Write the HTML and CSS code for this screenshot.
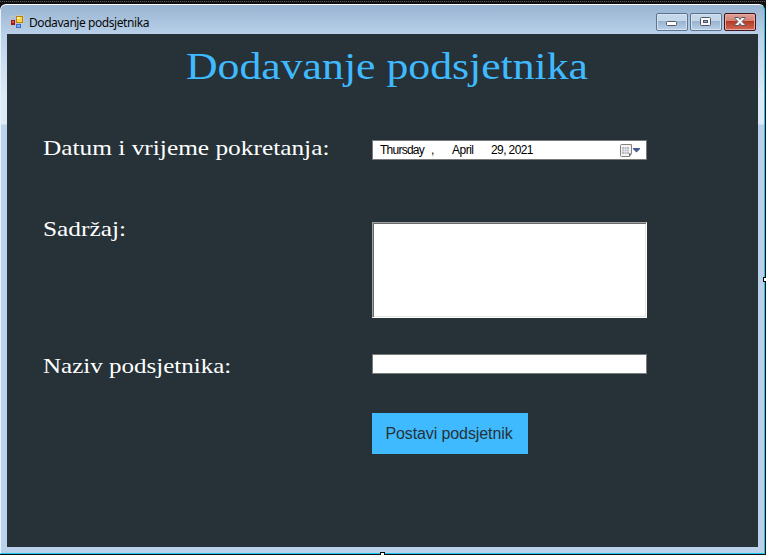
FILE: index.html
```
<!DOCTYPE html>
<html lang="hr">
<head>
<meta charset="utf-8">
<title>Dodavanje podsjetnika</title>
<link rel="stylesheet" href="styles.css">
</head>
<body>
<div class="window">
  <header class="titlebar">
    <svg class="app-icon" width="14" height="14" viewBox="0 0 14 14" shape-rendering="crispEdges">
      <path d="M.5 1.500h5v-1h8v8h-3v5h-10z" fill="none" stroke="#c3c6c8"/>
      <rect x="6" y="1" width="7" height="7" fill="#b98605"/><rect x="7" y="2" width="5" height="5" fill="#fbd44b"/><rect x="7" y="2" width="3" height="2" fill="#fff0a6"/>
      <rect x="1" y="5" width="4" height="5" fill="#a31510"/><rect x="2" y="6" width="2" height="2" fill="#e9513f"/>
      <rect x="6" y="9" width="5" height="4" fill="#3c6fc9"/><rect x="7" y="10" width="3" height="2" fill="#73aaf5"/>
    </svg>
    <span class="caption">Dodavanje podsjetnika</span>
    <div class="controls">
      <span class="control"><svg width="30" height="16"><rect x="9.500" y="7.500" width="10" height="4" rx="1" fill="#fff" stroke="#535666"/></svg></span>
      <span class="control"><svg width="30" height="16"><rect x="9.500" y="3.500" width="10" height="8" rx="1" fill="#f6f6f6" stroke="#535666"/><rect x="12.500" y="6.500" width="4" height="2" fill="#8facc9" stroke="#535666"/></svg></span>
      <span class="control close"><svg width="30" height="16"><path d="M10 3.500h3.500l1.500 2 1.500-2H20v1L17 7.500l3 3v1h-3.500l-1.500-2-1.500 2H10v-1l3-3-3-3z" fill="#f5f5f5" stroke="#535666"/></svg></span>
    </div>
  </header>
  <main class="client">
    <h1><span class="title-text">Dodavanje podsjetnika</span></h1>
    <div class="form">
      <span class="label l1">Datum i vrijeme pokretanja:</span>
      <div class="date">
        <span class="day">Thursday</span><span class="comma">,</span><span class="month">April</span><span class="year">29, 2021</span>
        <svg class="calendar" width="22" height="14" viewBox="0 0 22 14">
          <path d="M1.500.5h10v9l-2 3h-8a1 1 0 0 1-1-1v-10a1 1 0 0 1 1-1z" fill="#f7f5f3" stroke="#85807e"/>
          <path d="M9 12.500v-3h2.500z" fill="#625d5d"/>
          <rect x="2" y="3" width="7" height="7" fill="#b7bcc8"/>
          <path d="M4.500 3v7M6.500 3v7M2 5.500h7M2 7.500h7" stroke="#eef0f5" stroke-width=".6"/>
          <path d="M13 4h7v1l-3.500 3.500L13 5z" fill="#435d91"/>
        </svg>
      </div>
      <span class="label l2">Sadržaj:</span>
      <div class="content-box"></div>
      <span class="label l3">Naziv podsjetnika:</span>
      <div class="name-box"></div>
      <div class="submit"><span>Postavi podsjetnik</span></div>
    </div>
  </main>
  <i class="handle right"></i><i class="handle bottom"></i>
</div>
</body>
</html>
```
FILE: styles.css
```
* { box-sizing: border-box; }
body {
  margin: 0;
  padding-top: 4px;
  height: 555px;
  overflow: hidden;
  background: #101012 repeating-linear-gradient(90deg, #55565a 0 1px, #1d1d20 1px 2px) 0 1px / 100% 1px no-repeat;
}
.window {
  position: relative;
  width: 765px;
  height: 550px;
  padding: 0 6px 6px;
  border: 1px solid #18c9ef;
  border-top-color: #fff;
  border-left-color: #e9f1fa;
  border-radius: 6px 6px 0 0;
  background: linear-gradient(#99b4d1 0, #b9d1ea 30px, #dce9f6 88px, #dce9f6 119px, #b9d1ea 120px);
}
.titlebar {
  display: flex;
  align-items: flex-start;
  height: 29px;
  padding: 8px 2px 0 3px;
}
.app-icon { margin-top: 2px; }
.caption {
  margin: 1px 0 0 5px;
  font: 12px/18px "Noto Sans", "Open Sans", sans-serif;
  letter-spacing: -.43px;
  color: #080808;
}
.controls { display: flex; gap: 2px; margin-left: auto; }
.control {
  width: 32px;
  height: 18px;
  border: 1px solid #5c7390;
  border-radius: 2px;
  box-shadow: inset 0 0 0 1px #d5e3f1;
  background: linear-gradient(#c5d8ea 0 45%, #99b4d0 46%, #b9d0e7);
}
.control svg { display: block; }
.close {
  border-color: #43131b;
  box-shadow: inset 0 0 0 1px #e2aaa0;
  background: linear-gradient(#e0a195, #d28172 45%, #b33a23 46%, #d26a55);
}
.client { height: 513px; background: #263238; overflow: hidden; }
h1 {
  margin: 0;
  height: 106px;
  padding: 9px 0 0 179px;
  color: #40baff;
  font: 38px/46px "Liberation Serif", serif;
  white-space: nowrap;
}
.title-text { display: inline-block; transform: scaleX(1.151); transform-origin: left; }
.form {
  display: grid;
  grid-template-columns: 329px 275px;
  grid-template-rows: 82px 132px 59px 41px;
  padding-left: 36px;
  align-items: start;
}
.label {
  font: 22px/24px "Liberation Serif", serif;
  color: #fff;
  white-space: nowrap;
  justify-self: start;
  transform: scaleX(1.152);
  transform-origin: left;
}
.l1 { margin-top: -4px; }
.l2 { margin-top: -5px; }
.l3 { transform: scaleX(1.137); }
.date {
  display: flex;
  height: 20px;
  border: 1px solid #7a7a7a;
  background: #fff;
  padding: 0 4px 0 7px;
  font: 12px/18px "Liberation Sans", sans-serif;
  letter-spacing: -.5px;
  color: #000;
}
.day { width: 51px; letter-spacing: -.75px; }
.comma { width: 21px; }
.month { width: 39px; }
.year { letter-spacing: -.6px; }
.calendar { margin: 3px 0 0 auto; }
.content-box {
  height: 96px;
  background: #fff;
  border: 1px solid;
  border-color: #a0a0a0 #fff #fff #a0a0a0;
  box-shadow: inset 1px 1px #696969, inset -1px -1px #e3e3e3;
}
.name-box { height: 20px; background: #fff; border: 1px solid #7a7a7a; }
.submit {
  grid-column: 2;
  width: 156px;
  height: 41px;
  padding-right: 2px;
  background: #40baff;
  color: #263238;
  font: 16px/41px "Liberation Sans", sans-serif;
  letter-spacing: -.1px;
  text-align: center;
  white-space: nowrap;
}
.handle { position: absolute; width: 5px; height: 5px; background: #fff; border: 1px solid #000; }
.right { right: -4px; top: 272px; }
.bottom { left: 379px; bottom: -4px; }
```
